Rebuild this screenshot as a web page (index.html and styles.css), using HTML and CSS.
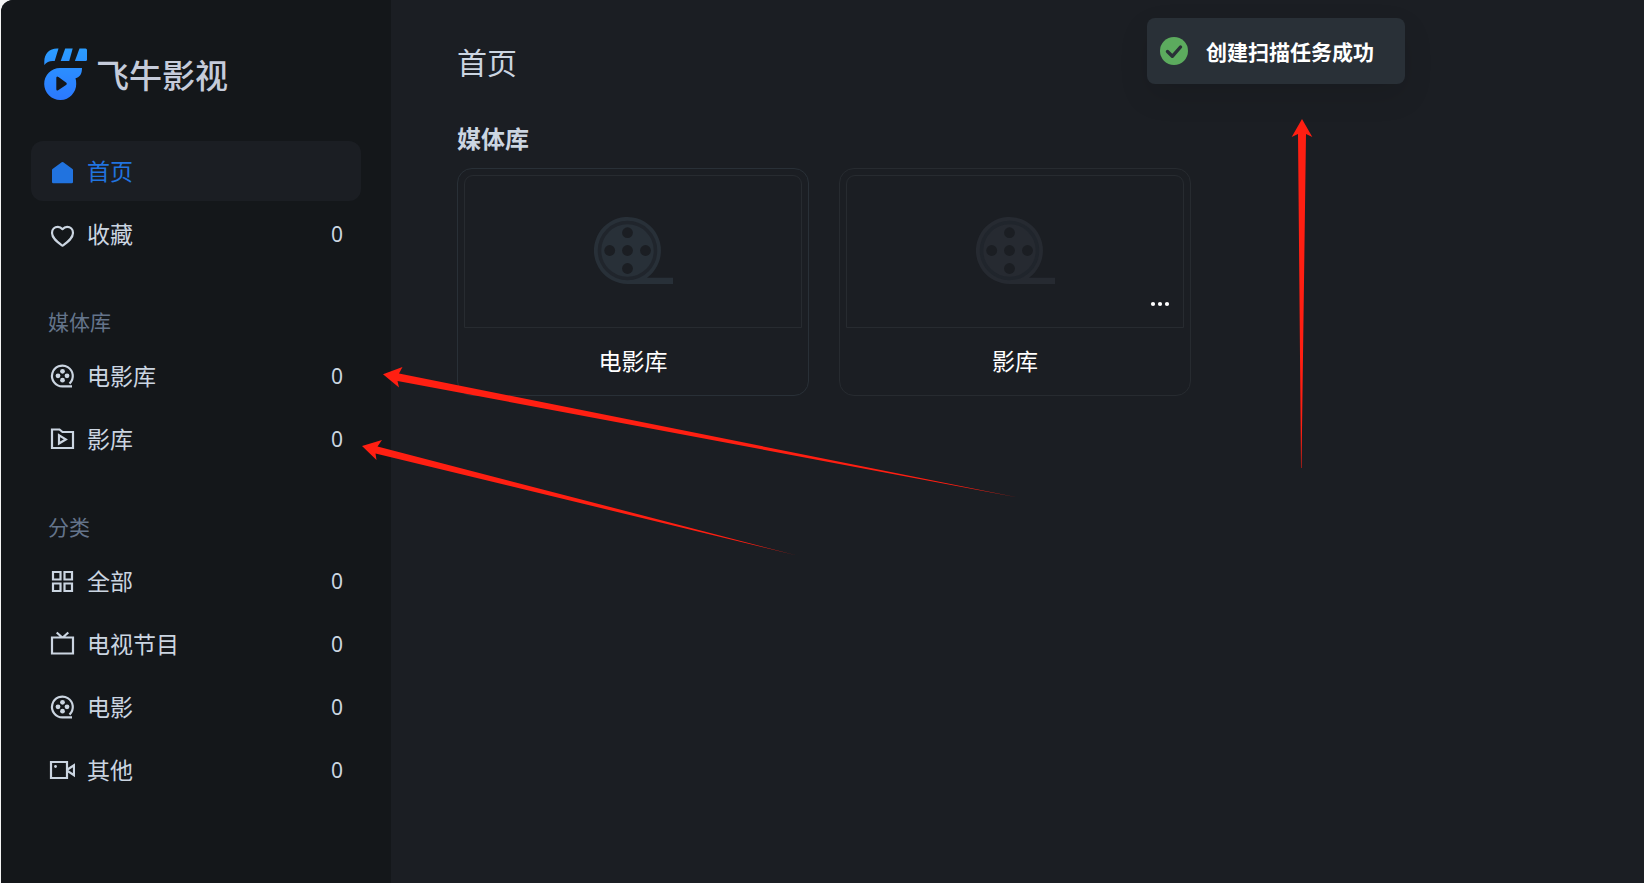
FILE: index.html
```html
<!DOCTYPE html>
<html lang="zh-CN">

<head>
    <meta charset="utf-8">
    <title>飞牛影视</title>
    <link rel="stylesheet" href="styles.css">
</head>

<body>
    <!-- shared icons -->
    <svg class="sprite" aria-hidden="true">
        <symbol id="icon-reel" viewBox="0 0 26 26">
            <path d="M20.5 20.6A10.4 10.4 0 1 0 13.5 23.4H23" fill="none" stroke="currentColor" stroke-width="2.2"/>
            <g fill="currentColor">
                <circle cx="13.5" cy="8.3" r="2.4"/>
                <circle cx="13.5" cy="17.2" r="2.4"/>
                <circle cx="9" cy="12.8" r="2.4"/>
                <circle cx="18" cy="12.8" r="2.4"/>
            </g>
        </symbol>
        <symbol id="icon-cover" viewBox="0 0 80 68">
            <path d="M33.5 67A33.5 33.5 0 1 1 53 60.7H79V67Z" fill="currentColor"/>
            <circle class="reel-ring" cx="33.5" cy="33.5" r="28" fill="none" stroke-width="3.5"/>
            <g class="reel-hole">
                <circle cx="33.5" cy="15.7" r="5.4"/>
                <circle cx="33.5" cy="33.5" r="5.4"/>
                <circle cx="33.5" cy="51.5" r="5.4"/>
                <circle cx="15.7" cy="33.5" r="5.4"/>
                <circle cx="51.5" cy="33.5" r="5.4"/>
            </g>
        </symbol>
    </svg>

    <div class="app">
        <aside class="sidebar">
            <div class="logo">
                <svg class="logo-mark" viewBox="0 0 44 52" aria-hidden="true">
                    <defs>
                        <linearGradient id="logo-fill" x1="0" y1="0" x2="0" y2="52" gradientUnits="userSpaceOnUse">
                            <stop offset="0" stop-color="#2b9dff"/>
                            <stop offset="1" stop-color="#2b78ff"/>
                        </linearGradient>
                    </defs>
                    <g fill="url(#logo-fill)">
                        <path d="M0.3 17V13.5C0.3 5.5 5.5 0.4 13 0.4H14.5L10.7 13H8.5C5 13 2.5 14.2 0.3 17Z"/>
                        <path d="M21.2 0.4H28.7L25.2 13H16.7Z"/>
                        <path d="M35.5 0.4H41.5Q43 0.4 43 1.9V11.5Q43 13 41.5 13H30.9Z"/>
                        <path fill-rule="evenodd" d="M16 20H38C38 26 36 29 31.5 30.3C32 32 32.2 33.8 32.2 35.5A16 16 0 1 1 16 20ZM12.3 30V41Q12.3 43.5 14.5 42L22 37Q23.5 35.7 22 34.5L14.5 29Q12.3 27.6 12.3 30Z"/>
                    </g>
                </svg>
                <span class="logo-text">飞牛影视</span>
            </div>

            <nav class="nav">
                <a class="nav-item active" href="#">
                    <svg class="icon" viewBox="0 0 26 26" aria-hidden="true">
                        <path d="M12.7 4.3Q13.5 3.7 14.3 4.3L23.5 11Q24 11.4 24 12V24Q24 25.2 22.8 25.2H4.2Q3 25.2 3 24V12Q3 11.4 3.5 11Z" fill="currentColor"/>
                    </svg>
                    <span class="label">首页</span>
                </a>
                <a class="nav-item" href="#">
                    <svg class="icon" viewBox="0 0 26 26" aria-hidden="true">
                        <path d="M13.5 8.2C12 6.5 10.5 5.9 8.9 5.9C5.5 5.9 3 8.4 3 12C3 17.5 9 21.5 13.5 24.7C18 21.5 24 17.5 24 12C24 8.4 21.5 5.9 18.1 5.9C16.5 5.9 15 6.5 13.5 8.2Z" fill="none" stroke="currentColor" stroke-width="2.2" stroke-linejoin="round"/>
                    </svg>
                    <span class="label">收藏</span>
                    <span class="count">0</span>
                </a>

                <h3 class="nav-title">媒体库</h3>
                <a class="nav-item" href="#">
                    <svg class="icon" aria-hidden="true"><use href="#icon-reel"/></svg>
                    <span class="label">电影库</span>
                    <span class="count">0</span>
                </a>
                <a class="nav-item" href="#">
                    <svg class="icon" viewBox="0 0 26 26" aria-hidden="true">
                        <path d="M3 3.5H10.5L13.5 6H24V22H3Z" fill="none" stroke="currentColor" stroke-width="2.2"/>
                        <path d="M10 9.3V17.5L16.8 13.4Z" fill="none" stroke="currentColor" stroke-width="2.2"/>
                    </svg>
                    <span class="label">影库</span>
                    <span class="count">0</span>
                </a>

                <h3 class="nav-title">分类</h3>
                <a class="nav-item" href="#">
                    <svg class="icon" viewBox="0 0 26 26" aria-hidden="true">
                        <path d="M4 4H11.5V11.5H4ZM15.5 4H23V11.5H15.5ZM4 15.5H11.5V23H4ZM15.5 15.5H23V23H15.5Z" fill="none" stroke="currentColor" stroke-width="2.2"/>
                    </svg>
                    <span class="label">全部</span>
                    <span class="count">0</span>
                </a>
                <a class="nav-item" href="#">
                    <svg class="icon" viewBox="0 0 26 26" aria-hidden="true">
                        <path d="M3 6.5H24V22.500H3ZM7.700 1.500L13 6.200M19.300 1.500L14 6.200" fill="none" stroke="currentColor" stroke-width="2.2"/>
                    </svg>
                    <span class="label">电视节目</span>
                    <span class="count">0</span>
                </a>
                <a class="nav-item" href="#">
                    <svg class="icon" aria-hidden="true"><use href="#icon-reel"/></svg>
                    <span class="label">电影</span>
                    <span class="count">0</span>
                </a>
                <a class="nav-item" href="#">
                    <svg class="icon" viewBox="0 0 26 26" aria-hidden="true">
                        <path d="M2 5H18V21H2ZM18.5 12.5L25 8.3V18.2L18.5 14Z" fill="none" stroke="currentColor" stroke-width="2.2"/>
                        <circle cx="6.5" cy="9.5" r="1.4" fill="currentColor"/>
                    </svg>
                    <span class="label">其他</span>
                    <span class="count">0</span>
                </a>
            </nav>
        </aside>

        <main class="main">
            <h1 class="page-title">首页</h1>
            <section>
                <h2 class="section-title">媒体库</h2>
                <div class="cards">
                    <article class="card">
                        <div class="cover">
                            <svg class="cover-icon" aria-hidden="true"><use href="#icon-cover"/></svg>
                        </div>
                        <a class="card-name" href="#">电影库</a>
                    </article>
                    <article class="card dim">
                        <div class="cover">
                            <svg class="cover-icon" aria-hidden="true"><use href="#icon-cover"/></svg>
                            <button class="more" type="button" aria-label="更多">
                                <svg viewBox="0 0 20 6" width="20" height="6" fill="currentColor" aria-hidden="true">
                                    <circle cx="3" cy="3" r="2.1"/>
                                    <circle cx="10" cy="3" r="2.1"/>
                                    <circle cx="17" cy="3" r="2.1"/>
                                </svg>
                            </button>
                        </div>
                        <a class="card-name" href="#">影库</a>
                    </article>
                </div>
            </section>
        </main>

        <div class="toast" role="status">
            <svg class="toast-icon" viewBox="0 0 28 28" aria-hidden="true">
                <circle cx="14" cy="14" r="14" fill="#5cab5e"/>
                <path d="M7.5 14.5L12.3 19.3L20.5 10" fill="none" stroke="#293037" stroke-width="3.4" stroke-linecap="round" stroke-linejoin="round"/>
            </svg>
            <span>创建扫描任务成功</span>
        </div>

        <!-- pointer arrows drawn over the page -->
        <svg class="arrows" width="1644" height="883" viewBox="0 0 1644 883" fill="#ff1f12" aria-hidden="true">
            <path d="M383 374.3L402.5 367L399 373.5L1021 498L397.5 381L399 387.5Z"/>
            <path d="M362 446L382 440L377.5 446.5L795 555L375.5 453.5L376.5 460Z"/>
            <path d="M1302 119L1312.3 137L1306 134L1301.5 468H1301L1298 134L1291.7 137Z"/>
        </svg>
    </div>
</body>

</html>
```
FILE: styles.css
```css
* {
    box-sizing: border-box;
}

body {
    margin: 0;
    background: #f4f4f4;
    color: #cbd5e1;
    font-family: "Noto Sans", "Noto Sans CJK SC", sans-serif;
    font-size: 23px;
}

h1, h2, h3 {
    margin: 0;
}

a {
    color: inherit;
    text-decoration: none;
}

.sprite {
    display: none;
}

.app {
    position: relative;
    display: flex;
    min-height: 100vh;
    margin-left: 1px;
    border-top-left-radius: 12px;
    background: #1b1e23;
    overflow: hidden;
}

/* Sidebar */
.sidebar {
    flex: 0 0 390px;
    padding: 48px 30px 30px;
    background: #14171a;
}

.logo {
    display: flex;
    align-items: center;
    gap: 8px;
    height: 52px;
    margin-bottom: 41px;
    padding-left: 13px;
}

.logo-mark {
    width: 44px;
    height: 52px;
}

.logo-text {
    padding-top: 4px;
    color: #c5cbda;
    font-size: 33px;
    font-style: oblique 8deg;
    font-weight: 500;
    line-height: 52px;
}

.nav {
    display: flex;
    flex-direction: column;
    gap: 3px;
}

.nav-item {
    display: flex;
    align-items: center;
    gap: 12px;
    height: 60px;
    padding: 0 18px;
    border-radius: 12px;
}

.nav-item.active {
    background: #1b1e23;
    color: #2173df;
}

.icon {
    flex: none;
    width: 26px;
    height: 26px;
}

.label {
    padding-bottom: 3px;
}

.count {
    margin-left: auto;
    font-size: 21px;
}

.nav-title {
    margin-top: 34px;
    padding-left: 17px;
    color: #64748b;
    font-size: 21px;
    font-weight: 400;
    line-height: 42px;
}

/* Main */
.main {
    flex: 1;
    padding: 43px 66px;
}

.page-title {
    margin-bottom: 39px;
    font-size: 30px;
    font-weight: 400;
    line-height: 40px;
}

.section-title {
    margin-bottom: 12px;
    font-size: 24px;
    font-weight: 700;
    line-height: 34px;
}

.cards {
    display: grid;
    grid-template-columns: repeat(auto-fill, 352px);
    gap: 30px;
}

.card {
    padding: 6px 6px 0;
    border: 1px solid #293037;
    border-radius: 15px;
    color: #283038;
}

.card.dim {
    border-color: #272b30;
    color: #262a31;
}

.cover {
    position: relative;
    display: flex;
    align-items: center;
    justify-content: center;
    height: 153px;
    padding: 0 0 2px 2px;
    border: 1px solid #272b30;
    border-radius: 9px 9px 0 0;
}

.cover-icon {
    width: 80px;
    height: 68px;
}

.reel-ring {
    stroke: #20252c;
}

.reel-hole {
    fill: #1b1e23;
}

.card-name {
    display: block;
    color: #fff;
    line-height: 67px;
    text-align: center;
}

.more {
    position: absolute;
    right: 13px;
    bottom: 12px;
    display: flex;
    padding: 8px 0;
    border: 0;
    background: none;
    color: #fff;
    cursor: pointer;
}

/* Toast */
.toast {
    position: absolute;
    top: 18px;
    right: 239px;
    display: flex;
    align-items: center;
    gap: 18px;
    height: 66px;
    padding: 0 31px 0 13px;
    border-radius: 8px;
    background: #293037;
    box-shadow: 0 12px 30px rgba(0, 0, 0, 0.1);
    color: #fff;
    font-size: 21px;
    font-weight: 700;
}

.toast-icon {
    width: 28px;
    height: 28px;
}

.arrows {
    position: absolute;
    top: 0;
    left: -1px;
    pointer-events: none;
}
```
